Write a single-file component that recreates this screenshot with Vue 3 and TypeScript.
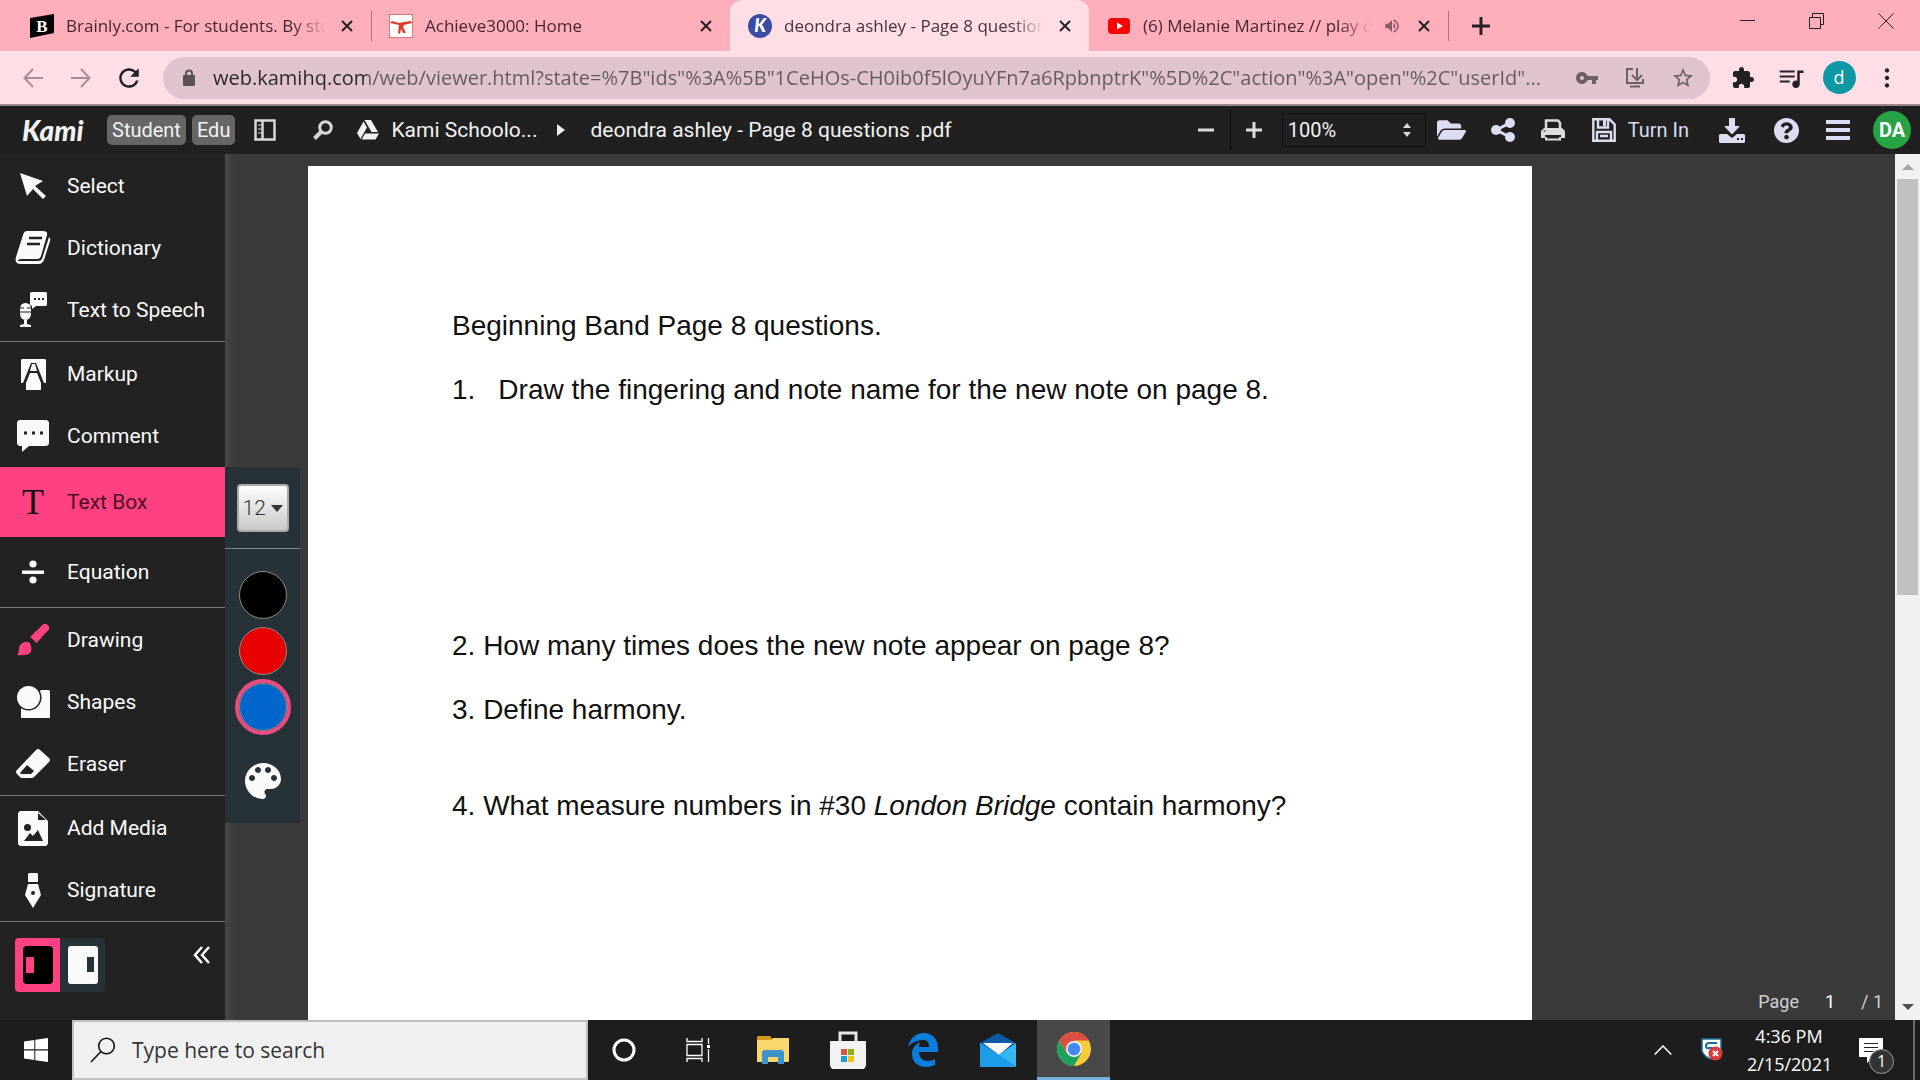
<script setup lang="ts">
import { ref } from 'vue'

const address = ref('web.kamihq.com/web/viewer.html?state=%7B"ids"%3A%5B"1CeHOs-CH0ib0f5lOyuYFn7a6RpbnptrK"%5D%2C"action"%3A"open"%2C"userId"...')
const zoomLevel = ref('100%')
const fontSize = ref('12')
const pageNumber = ref('1')
const colour = ref('blue')
const swatches = [
  { name: 'black', value: '#000000' },
  { name: 'red', value: '#e60000' },
  { name: 'blue', value: '#0066cc' },
]
</script>

<template>
  <div class="screen">
    <!-- Browser tabs -->
    <header class="tabs">
      <div class="tab">
        <svg class="fav" viewBox="0 0 24 24">
          <path d="M0 4 24 0V19L0 24Z" fill="#000" />
          <text x="12" y="18" text-anchor="middle" font-family="Liberation Serif, serif" font-weight="700" font-size="17" fill="#fff">B</text>
        </svg>
        <span class="tab-title">Brainly.com - For students. By stu</span>
        <button class="tab-x" aria-label="Close tab"><svg viewBox="0 0 12 12"><path d="M1 1 11 11M11 1 1 11" /></svg></button>
      </div>
      <div class="tab ruled">
        <svg class="fav" viewBox="0 0 24 24">
          <rect x=".5" y=".5" width="23" height="23" fill="#fff" stroke="#d67a78" />
          <path d="M1 9 3 7 10 9 15 8 22 7 23 9 15 11 14 13 17 19 14 19 12 15 11 20 9 19 10 11Z" fill="#dd3a2c" />
        </svg>
        <span class="tab-title">Achieve3000: Home</span>
        <button class="tab-x" aria-label="Close tab"><svg viewBox="0 0 12 12"><path d="M1 1 11 11M11 1 1 11" /></svg></button>
      </div>
      <div class="tab active">
        <svg class="fav" viewBox="0 0 24 24">
          <circle cx="12" cy="12" r="12" fill="#3b4ba8" />
          <text x="12" y="18" text-anchor="middle" font-family="Lato, sans-serif" font-weight="900" font-style="italic" font-size="18" fill="#fff">K</text>
        </svg>
        <span class="tab-title">deondra ashley - Page 8 question</span>
        <button class="tab-x" aria-label="Close tab"><svg viewBox="0 0 12 12"><path d="M1 1 11 11M11 1 1 11" /></svg></button>
      </div>
      <div class="tab">
        <svg class="fav" viewBox="0 0 24 24">
          <rect x="1" y="4" width="22" height="16" rx="4" fill="#f00" />
          <path d="M10 8.500 16 12 10 15.500Z" fill="#fff" />
        </svg>
        <span class="tab-title">(6) Melanie Martinez // play d</span>
        <svg class="speaker" viewBox="0 0 24 24"><path d="M3 9v6h4l5 5V4L7 9H3zm13.500 3c0-1.770-1.020-3.290-2.500-4.030v8.050c1.480-.73 2.500-2.250 2.500-4.020zM14 3.230v2.060c2.890.86 5 3.540 5 6.710s-2.110 5.850-5 6.710v2.060c4.010-.91 7-4.490 7-8.770s-2.990-7.860-7-8.770z" /></svg>
        <button class="tab-x" aria-label="Close tab"><svg viewBox="0 0 12 12"><path d="M1 1 11 11M11 1 1 11" /></svg></button>
      </div>
      <button class="new-tab" aria-label="New tab"><svg viewBox="0 0 18 18" width="18" height="18"><path d="M9 0V18M0 9H18" stroke="#222" stroke-width="3" /></svg></button>
      <div class="window-controls">
        <button aria-label="Minimize"><svg width="16" height="16"><path d="M0 7.500H15" /></svg></button>
        <button aria-label="Restore"><svg width="16" height="16"><path d="M.5 4.500H11.500V15.500H.5ZM3.500 4.500V.5H14.500V11.500H11.500" /></svg></button>
        <button aria-label="Close"><svg width="16" height="16"><path d="M.5 .5 15.500 15.500M15.500 .5 .5 15.500" /></svg></button>
      </div>
    </header>

    <!-- Address bar -->
    <div class="navbar">
      <button class="nav-btn dim" aria-label="Back"><svg width="20" height="20" viewBox="0 0 20 20"><path d="M20 10H2M10 1 1.500 10 10 19" /></svg></button>
      <button class="nav-btn dim" aria-label="Forward"><svg width="20" height="20" viewBox="0 0 20 20"><path d="M0 10H18M10 1 18.500 10 10 19" /></svg></button>
      <button class="nav-btn" aria-label="Reload"><svg width="22" height="22" viewBox="3 3 18 18"><path class="solid" d="M17.650 6.350C16.200 4.900 14.210 4 12 4c-4.420 0-7.990 3.580-7.990 8s3.570 8 7.990 8c3.730 0 6.840-2.550 7.730-6h-2.080c-.82 2.330-3.040 4-5.650 4-3.310 0-6-2.690-6-6s2.690-6 6-6c1.660 0 3.140.69 4.220 1.780L13 11h7V4l-2.350 2.350z" /></svg></button>
      <div class="omnibox">
        <svg width="12" height="18" viewBox="0 0 12 18" class="lock"><path d="M3 7V4.500a3 3 0 0 1 6 0V7" fill="none" stroke="#5a5155" stroke-width="2" /><rect y="6" width="12" height="11" rx="1" fill="#5a5155" /></svg>
        <input v-model="address" class="url" aria-label="Address" spellcheck="false">
        <button class="nav-btn grey" aria-label="Passwords"><svg width="24" height="24" viewBox="0 0 24 24"><path class="solid" d="M12.650 10C11.830 7.670 9.610 6 7 6c-3.310 0-6 2.690-6 6s2.690 6 6 6c2.610 0 4.830-1.670 5.650-4H17v4h4v-4h2v-4H12.650zM7 14c-1.100 0-2-.9-2-2s.9-2 2-2 2 .9 2 2-.9 2-2 2z" /></svg></button>
        <button class="nav-btn grey" aria-label="Install"><svg width="20" height="20" viewBox="0 0 20 20"><path d="M8 1H2V15H18V11M12 0V11M7 7 12 12 17 7M5 18.500H15" /></svg></button>
        <button class="nav-btn grey" aria-label="Bookmark"><svg width="24" height="24" viewBox="0 0 24 24"><path class="solid" d="M22 9.240l-7.190-.62L12 2 9.190 8.630 2 9.240l5.460 4.730L5.820 21 12 17.270 18.180 21l-1.630-7.030L22 9.240zM12 15.400l-3.760 2.270 1-4.280-3.320-2.880 4.380-.38L12 6.100l1.710 4.040 4.380.38-3.320 2.880 1 4.280L12 15.400z" /></svg></button>
      </div>
      <button class="nav-btn" aria-label="Extensions"><svg width="24" height="24" viewBox="0 0 24 24"><path class="solid" d="M20.500 11H19V7c0-1.100-.9-2-2-2h-4V3.500C13 2.120 11.880 1 10.500 1S8 2.120 8 3.500V5H4c-1.100 0-1.990.9-1.990 2v3.800H3.500c1.490 0 2.700 1.210 2.700 2.700s-1.210 2.700-2.700 2.700H2V20c0 1.100.9 2 2 2h3.800v-1.500c0-1.490 1.210-2.700 2.700-2.700 1.490 0 2.700 1.210 2.700 2.700V22H17c1.100 0 2-.9 2-2v-4h1.500c1.380 0 2.500-1.120 2.500-2.500S21.880 11 20.500 11z" /></svg></button>
      <button class="nav-btn" aria-label="Media"><svg width="30" height="30" viewBox="0 0 24 24"><path class="solid" d="M15 6H3v1.500h12V6zm0 4H3v1.500h12v-1.500zM3 15.500h8V14H3v1.500zM17 6v8.180c-.31-.11-.65-.18-1-.18-1.660 0-3 1.340-3 3s1.340 3 3 3 3-1.340 3-3V8h3V6h-5z" /></svg></button>
      <button class="nav-btn" aria-label="Profile"><span class="profile">d</span></button>
      <button class="nav-btn" aria-label="More"><svg width="6" height="20" viewBox="0 0 6 20"><path class="solid" d="M3 .3a2.200 2.200 0 1 0 .01 0ZM3 7.800a2.200 2.200 0 1 0 .01 0ZM3 15.300a2.200 2.200 0 1 0 .01 0Z" /></svg></button>
    </div>

    <!-- Kami toolbar -->
    <div class="appbar">
      <span class="logo">Kami</span>
      <span class="badge">Student</span>
      <span class="badge">Edu</span>
      <button class="side-toggle" aria-label="Toggle sidebar"><svg width="22" height="22" viewBox="0 0 22 22"><path d="M1.500 1.500H20.500V20.500H1.500ZM8.500 2V20" fill="none" stroke="#d8d8d8" stroke-width="2.500" /><path d="M4 6H7M4 10H7M4 14H7" stroke="#d8d8d8" /></svg></button>
      <button class="find" aria-label="Find"><svg width="20" height="20" viewBox="0 0 20 20"><circle cx="12.500" cy="7.500" r="5.800" fill="none" stroke="#d8d8d8" stroke-width="3" /><path d="M8 12 1.500 18.500" stroke="#d8d8d8" stroke-width="4" /></svg></button>
      <svg class="drive" width="22" height="20" viewBox="0 0 22 20"><path d="M7.500 0H14L21 12H14.500ZM6.500 1.500 10 7.500 3.500 19 0 13ZM8 13.500H22L18.500 19.500H4.700Z" fill="#f0f0f0" /></svg>
      <a href="#" class="crumb">Kami Schoolo...</a>
      <svg class="crumb-arrow" width="8" height="12"><path d="M0 0 8 6 0 12Z" fill="#eee" /></svg>
      <span class="file-name">deondra ashley - Page 8 questions .pdf</span>

      <div class="app-tools">
        <button class="minus" aria-label="Zoom out"><svg width="16" height="16"><path d="M0 8H16" stroke="#dcdcdc" stroke-width="3" /></svg></button>
        <button class="plus" aria-label="Zoom in"><svg width="16" height="16"><path d="M0 8H16M8 0V16" stroke="#dcdcdc" stroke-width="3" /></svg></button>
        <div class="zoom">
          <select v-model="zoomLevel" aria-label="Zoom"><option>50%</option><option>100%</option><option>150%</option></select>
          <svg width="8" height="14" viewBox="0 0 8 14"><path d="M0 5 4 0 8 5ZM0 9 4 14 8 9Z" fill="#dcdcdc" /></svg>
        </div>
        <button class="open" aria-label="Open"><svg width="29" height="26" viewBox="0 0 576 512"><path d="M572.694 292.093L500.270 416.248A63.997 63.997 0 0 1 444.989 448H45.025c-18.523 0-30.064-20.093-20.731-36.093l72.424-124.155A64 64 0 0 1 152 256h399.964c18.523 0 30.064 20.093 20.730 36.093zM152 224h328v-48c0-26.510-21.490-48-48-48H272l-64-64H48C21.490 64 0 85.490 0 112v278.046l69.077-118.418C86.214 242.250 117.989 224 152 224z" /></svg></button>
        <button aria-label="Share"><svg width="24" height="24" viewBox="0 0 24 24"><path d="M19 5 5 12 19 19" fill="none" stroke="#dcdcf2" stroke-width="3" /><circle cx="19" cy="5" r="5" /><circle cx="5" cy="12" r="5" /><circle cx="19" cy="19" r="5" /></svg></button>
        <button aria-label="Print"><svg width="24" height="22" viewBox="0 0 24 22"><path d="M5 10V1.500H17L19 4V10" fill="none" stroke="#dcdcdc" stroke-width="2.500" /><path d="M3 9H21L24 12V19H20V16H4V19H0V12Z" fill="#dcdcdc" /><path d="M5 18V20.500H19V18" fill="none" stroke="#dcdcdc" stroke-width="2" /><circle cx="3.500" cy="12" r="1" fill="#555" /></svg></button>
        <button class="turn-in"><svg width="24" height="24" viewBox="0 0 24 24"><path d="M1.300 1.300H17.500L22.700 6.500V22.700H1.300ZM6 2V9.500H16V2M5 22V14H19V22M8 18H16" fill="none" stroke="#dcdcf2" stroke-width="2.400" /><path d="M11 2H14V8H11Z" /></svg>Turn In</button>
        <button class="wide" aria-label="Download"><svg width="26" height="25" viewBox="0 0 26 25"><path d="M10 0H16V8H21L13 16.500 5 8H10ZM1 16H8L13 20 18 16H25L26 17V24L25 25H1L0 24V17Z" /><path d="M18 21H20M22 21H24" stroke="#202020" stroke-width="2" /></svg></button>
        <button class="wide" aria-label="Help"><svg width="25" height="25" viewBox="8 8 496 496"><path d="M504 256c0 136.997-111.043 248-248 248S8 392.997 8 256C8 119.083 119.043 8 256 8s248 111.083 248 248zM262.655 90c-54.497 0-89.255 22.957-116.549 63.758-3.536 5.286-2.353 12.415 2.715 16.258l34.699 26.310c5.205 3.947 12.621 3.008 16.665-2.122 17.864-22.658 30.113-35.797 57.303-35.797 20.429 0 45.698 13.148 45.698 32.958 0 14.976-12.363 22.667-32.534 33.976C247.128 238.528 216 254.941 216 296v4c0 6.627 5.373 12 12 12h56c6.627 0 12-5.373 12-12v-1.333c0-28.462 83.186-29.647 83.186-106.667 0-58.002-60.165-102-116.531-102zM256 338c-25.365 0-46 20.635-46 46 0 25.364 20.635 46 46 46s46-20.636 46-46c0-25.365-20.635-46-46-46z" /></svg></button>
        <button aria-label="Menu"><svg width="24" height="20"><path d="M0 2H24M0 10H24M0 18H24" stroke="#dcdcf2" stroke-width="4" /></svg></button>
        <button class="account" aria-label="Account">DA</button>
      </div>
    </div>

    <!-- Workspace -->
    <main class="workspace">
      <nav class="sidebar">
        <button class="tool"><span class="icon"><svg width="26" height="26" viewBox="0 0 26 26"><path d="M0 0 23 8 15 13 26 23 23 26 13 16 7 23Z" /></svg></span>Select</button>
        <button class="tool"><span class="icon"><svg width="36" height="34" viewBox="0 0 36 34"><path d="M12 0H28Q33 0 32 4L26 25Q25 28 22 28H6Q3 28 3 30H23Q26 30 27 28L34 6Q36 7 35 10L29 29Q27 33 24 33H6Q-1 33 1 26L8 4Q9 0 12 0Z" /><path d="M14 7H27M12 13H25" stroke="#222" stroke-width="2.500" /></svg></span>Dictionary</button>
        <button class="tool"><span class="icon"><svg width="28" height="36" viewBox="0 0 28 36"><path d="M12 0H27L28 1V13L27 14H17L13 17V14L11 13V1Z" /><path d="M1 17Q1 11 6.500 11T12 17V21Q12 28 6.500 28T1 21ZM5 28H8V32L12 33V35H1V33L5 32Z" /><path d="M1 16H5M8 16H12M1 20H12" stroke="#222" /><path d="M15 7H17M19 7H21M23 7H25" stroke="#222" stroke-width="2" /></svg></span>Text to Speech</button>
        <hr>
        <button class="tool"><span class="icon"><svg width="25" height="31" viewBox="0 0 25 31"><path d="M1 0H24L25 1V24H23L15 4H10L2 24H0V1Z" /><path d="M9 14H16L20 24V31H5V24Z" /><path d="M11 5H14L16 12H9Z" /></svg></span>Markup</button>
        <button class="tool"><span class="icon"><svg width="32" height="32" viewBox="0 0 32 32"><path d="M2 0H30L32 2V24L30 26H12L5 32V26H2L0 24V2Z" /><path d="M7 13H10M15 13H18M23 13H26" stroke="#222" stroke-width="3" /></svg></span>Comment</button>
        <div class="tool-holder">
          <button class="tool tall selected"><span class="icon serif-t">T</span>Text Box</button>
          <section class="options" aria-label="Text box options">
            <div class="size-row">
              <div class="size">
                <select v-model="fontSize" aria-label="Font size"><option>10</option><option>12</option><option>14</option></select>
                <svg width="12" height="7"><path d="M0 0H12L6 7Z" fill="#333" /></svg>
              </div>
            </div>
            <div class="swatches">
              <button v-for="s in swatches" :key="s.name" class="swatch" :class="{ chosen: s.name === colour }" :aria-label="s.name" @click="colour = s.name">
                <svg width="48" height="48"><circle cx="24" cy="24" r="23.500" :fill="s.value" stroke="#8a8a82" /></svg>
              </button>
              <button class="palette" aria-label="More colours"><svg width="36" height="36" viewBox="3 3 18 18"><path d="M12 3c-4.970 0-9 4.030-9 9s4.030 9 9 9c.83 0 1.500-.67 1.500-1.500 0-.39-.15-.74-.39-1.010-.23-.26-.38-.61-.38-.99 0-.83.67-1.500 1.500-1.500H16c2.760 0 5-2.240 5-5 0-4.420-4.030-8-9-8zm-5.500 9c-.83 0-1.500-.67-1.500-1.500S5.670 9 6.500 9 8 9.670 8 10.500 7.330 12 6.500 12zm3-4C8.670 8 8 7.330 8 6.500S8.670 5 9.500 5s1.500.67 1.500 1.500S10.330 8 9.500 8zm5 0c-.83 0-1.500-.67-1.500-1.500S13.670 5 14.500 5s1.500.67 1.500 1.500S15.330 8 14.500 8zm3 4c-.83 0-1.500-.67-1.500-1.500S16.670 9 17.500 9s1.500.67 1.500 1.500-.67 1.500-1.500 1.500z" /></svg></button>
            </div>
          </section>
        </div>
        <button class="tool tall"><span class="icon"><svg width="24" height="24"><circle cx="12" cy="4" r="3.600" /><circle cx="12" cy="20" r="3.600" /><path d="M1 10.500H23V14H1Z" /></svg></span>Equation</button>
        <hr>
        <button class="tool"><span class="icon"><svg width="32" height="32" viewBox="0 0 32 32"><path d="M28 4 19 13" stroke="#ff4081" stroke-width="8" stroke-linecap="round" /><path d="M13 13.500 19 7 25 13 19 19.500Q18 15 13 13.500Z" fill="#ff4081" /><path d="M2 24Q3 19 8 18T14 22 13 29Q9 32 0 31Q2 29 2 24Z" fill="#ff4081" /></svg></span>Drawing</button>
        <button class="tool"><span class="icon"><svg width="33" height="32" viewBox="0 0 33 32"><path d="M24 4H32L33 5V32H4V22Z" /><circle cx="11.500" cy="11.500" r="13" fill="#222" /><circle cx="11.500" cy="11.500" r="11.500" /></svg></span>Shapes</button>
        <button class="tool"><span class="icon"><svg width="34" height="30" viewBox="0 0 34 30"><path d="M20 1Q22 -1 24 1L33 9Q35 11 33 13L18 28Q17 29 15 29H5L1 25Q-1 23 1 21Z" /><path d="M4 24 11 16 18 22 15 25H5Z" fill="#222" /></svg></span>Eraser</button>
        <hr>
        <button class="tool"><span class="icon"><svg width="30" height="35" viewBox="0 0 30 35"><path d="M2 0H20L30 10V33L28 35H2L0 33V2Z" /><path d="M20 2V9H28ZM6 30 12 22 15 25 20 19 25 30Z" fill="#222" /><circle cx="9.500" cy="16.500" r="3.500" fill="#222" /></svg></span>Add Media</button>
        <button class="tool"><span class="icon"><svg width="16" height="35" viewBox="0 0 16 35"><path d="M3 1 4 0H12L13 1V9H3ZM3 11H13L16 22 8 35 0 22Z" /><circle cx="8" cy="20" r="2" fill="#222" /></svg></span>Signature</button>
        <hr>
        <div class="side-foot">
          <button class="dock on" aria-label="Dock left"><svg width="30" height="38"><rect width="30" height="38" rx="4" fill="#000" /><rect x="3" y="11" width="8" height="16" fill="#ff4081" /></svg></button>
          <button class="dock" aria-label="Dock right"><svg width="30" height="38"><rect width="30" height="38" rx="3" /><rect x="19" y="11" width="7" height="15" fill="#263238" /></svg></button>
          <button class="collapse" aria-label="Collapse"><svg width="17" height="18" viewBox="0 0 17 18"><path d="M9 1 2 9 9 17M16 1 9 9 16 17" fill="none" stroke="#fff" stroke-width="2.500" /></svg></button>
        </div>
      </nav>

      <div class="viewer">
        <article class="paper">
          <p>Beginning Band Page 8 questions.</p>
          <p class="answer-large"><span class="num">1.</span>Draw the fingering and note name for the new note on page 8.</p>
          <p>2. How many times does the new note appear on page 8?</p>
          <p class="answer-small">3. Define harmony.</p>
          <p>4. What measure numbers in #30 <em>London Bridge</em> contain harmony?</p>
        </article>
        <div class="pager"><label for="page-no">Page</label><input id="page-no" v-model="pageNumber"><span>/ 1</span></div>
      </div>
      <div class="scrollbar">
        <svg width="12" height="6"><path d="M0 6 6 0 12 6Z" fill="#a3a3a3" /></svg>
        <div class="track"><div class="thumb"></div></div>
        <svg width="12" height="6"><path d="M0 0 6 6 12 0Z" fill="#505050" /></svg>
      </div>
    </main>

    <!-- Windows taskbar -->
    <footer class="taskbar">
      <button class="start" aria-label="Start"><svg width="24" height="24" viewBox="0 0 24 24"><path d="M0 3.500 10.300 2V11.300H0ZM11.300 1.800 24 0V11.300H11.300ZM0 12.500H10.300V22L0 20.500ZM11.300 12.500H24V24L11.300 22.200Z" fill="#fff" /></svg></button>
      <div class="search">
        <svg width="26" height="26" viewBox="0 0 26 26"><circle cx="16.500" cy="9" r="7.800" fill="none" stroke="#111" stroke-width="1.600" /><path d="M11 14.500 1 25" stroke="#111" stroke-width="1.600" /></svg>
        <input placeholder="Type here to search" aria-label="Type here to search">
      </div>
      <button class="task cortana" aria-label="Cortana"><svg width="24" height="24"><circle cx="12" cy="12" r="10" fill="none" stroke="#fff" stroke-width="3" /></svg></button>
      <button class="task" aria-label="Task view"><svg width="24" height="24"><path d="M1 0V3.500H16V0M1 6.500H16V17.500H1ZM1 24V20.500H16V24M22.500 0V6M22.500 11V24" fill="none" stroke="#fff" stroke-width="1.300" /><path d="M21 7H24V10H21Z" fill="#fff" /></svg></button>
      <button class="task" aria-label="File Explorer"><svg width="32" height="28" viewBox="0 0 32 28"><path d="M0 1 1 0H13L15 3V6H0Z" fill="#d49a18" /><path d="M0 4H14L16 2H32V25L31 26H0Z" fill="#fbd66c" /><path d="M5 16 7 14H25L27 16V28H21V21H11V28H5Z" fill="#3e93cd" /></svg></button>
      <button class="task" aria-label="Store"><svg width="36" height="38" viewBox="0 0 36 38"><path d="M10 11V2H26V11" fill="none" stroke="#e6e6e6" stroke-width="3" /><path d="M0 10H36V35L34 38H2L0 35Z" fill="#f2f2f2" /><path d="M11 18H17V24H11Z" fill="#d9543f" /><path d="M18 18H24V24H18Z" fill="#8ab313" /><path d="M11 25H17V31H11Z" fill="#18a0dc" /><path d="M18 25H24V31H18Z" fill="#f3c114" /></svg></button>
      <button class="task" aria-label="Edge"><svg width="30" height="34" viewBox="0 0 30 34"><path d="M0 14C2 5 8 0 16 0C25 0 30 7 30 15V19H11C11 25 15 28 20 28C23 28 25 27 27 26V32C24 33 21 34 18 34C10 34 4 29 4 21C4 15 8 11 12 9C11 11 11 12 11 14H21C21 9 19 7 15 7C10 7 4 9 0 14Z" fill="#0a7ddb" /></svg></button>
      <button class="task" aria-label="Mail"><svg width="36" height="34" viewBox="0 0 36 34"><path d="M0 10 18 0 36 10V22H0Z" fill="#0c59a4" /><path d="M3 10H33L19 22Z" fill="#f6f6f6" /><path d="M0 10 19 22 36 10V34H0Z" fill="#35b8f1" /><path d="M0 10 36 33V34H0Z" fill="#1d9cea" /></svg></button>
      <button class="task current" aria-label="Chrome"><svg width="34" height="34" viewBox="0 0 34 34"><circle cx="17" cy="17" r="17" fill="#fbcb3c" /><path d="M17 17V8.500H31.700A17 17 0 0 0 2.300 8.500L9.600 21.300Z" fill="#dc4e41" /><path d="M2.300 8.500A17 17 0 0 0 17 34L24.400 21.300 17 17 9.600 21.300Z" fill="#1da260" /><circle cx="17" cy="17" r="8" fill="#f1f1f1" /><circle cx="17" cy="17" r="6.300" fill="#4587f3" /></svg></button>
      <div class="tray">
        <button class="chev" aria-label="Show hidden icons"><svg width="18" height="10"><path d="M.7 9.500 9 1 17.300 9.500" fill="none" stroke="#fff" stroke-width="1.500" /></svg></button>
        <svg class="shield" width="22" height="24" viewBox="0 0 22 24"><path d="M1 1H20V14Q17 20 10 21Q3 19 1 13Z" fill="#fff" stroke="#1b6c9c" stroke-width="1.500" /><path d="M16 5H8Q5 5 5 8T8 10H14" fill="none" stroke="#1b6c9c" stroke-width="2" /><circle cx="14.500" cy="15.500" r="7" fill="#d93a3a" /><path d="M12 13 17 18M17 13 12 18" stroke="#fff" stroke-width="2" /></svg>
        <div class="clock"><time>4:36 PM</time><time>2/15/2021</time></div>
        <button class="notice" aria-label="Notifications">
          <svg width="24" height="25"><path d="M0 0H24V19H14L8 25V19H0Z" fill="#fff" /><path d="M5 5.500H19M5 9.500H19M5 13.500H14" stroke="#222" /></svg>
          <span>1</span>
        </button>
      </div>
    </footer>
  </div>
</template>

<style>
body { margin: 0; }
</style>

<style scoped>
.screen { display: flex; flex-direction: column; min-height: 100vh; font-family: Roboto, sans-serif; background: #1d1d1d; }
* { box-sizing: border-box; }
button, input, select { font: inherit; color: inherit; border: 0; padding: 0; margin: 0; background: none; border-radius: 0; outline: 0; }
button { display: flex; align-items: center; justify-content: center; flex: none; cursor: pointer; }
svg { flex: none; display: block; }

.tabs { display: flex; height: 51px; padding-left: 12px; background: #ffaebb; font: 17px/24px "Open Sans", sans-serif; color: #45282f; }
.tab { position: relative; flex: 0 1 359px; min-width: 0; display: flex; align-items: center; padding: 0 15px 0 18px; }
.tab.active { background: #ffdfe5; border-radius: 12px 12px 0 0; color: #45343a; }
.tab.ruled::before, .new-tab::before { content: ""; position: absolute; left: 0; top: 11px; width: 1px; height: 30px; background: #b0707c; }
.fav { width: 24px; height: 24px; }
.tab-title { flex: 1; min-width: 0; margin: 0 12px; overflow: hidden; white-space: nowrap; mask-image: linear-gradient(to right, #000 calc(100% - 32px), transparent); }
.speaker { width: 18px; height: 18px; margin-right: 14px; fill: #8a5c66; }
.tab-x { width: 18px; height: 24px; }
.tab-x svg { width: 12px; height: 12px; stroke: #222; stroke-width: 2; }
.new-tab { position: relative; width: 66px; }
.window-controls { display: flex; margin-left: auto; height: 42px; }
.window-controls button { width: 69px; }
.window-controls svg { fill: none; stroke: #2b1c20; }

.navbar { display: flex; align-items: center; height: 55px; padding: 0 9px; background: #ffdfe5; border-bottom: 2px solid #9b878c; }
.nav-btn { width: 48px; height: 42px; }
.nav-btn svg { fill: none; stroke: #222; stroke-width: 2; }
.nav-btn .solid { fill: #222; stroke: none; }
.nav-btn.dim svg { stroke: #a98d94; }
.nav-btn.grey svg { stroke: #6b6064; }
.nav-btn.grey .solid { fill: #6b6064; }
.omnibox { flex: 1; min-width: 0; display: flex; align-items: center; height: 42px; margin: 0 9px 0 10px; padding: 0 3px 0 20px; border-radius: 21px; background: #dfc5cb; }
.url { flex: 1; min-width: 0; height: 42px; margin-left: 18px; font: 20px/28px "Open Sans", sans-serif; color: #65595d; background: linear-gradient(to right, #2c2528 154px, #65595d 154px) text; -webkit-text-fill-color: transparent; }
.profile { width: 33px; height: 33px; border-radius: 50%; background: #0e98a6; color: #fff; font: 18px/32px "Open Sans", sans-serif; text-align: center; }

.appbar { display: flex; align-items: center; height: 48px; padding: 0 9px 0 22px; background: #202020; color: #f2f2f2; font-size: 20px; line-height: 28px; white-space: nowrap; }
.logo { width: 85px; font: italic 900 28px/30px Lato, sans-serif; }
.badge { padding: 0 5px; margin-right: 6px; border-radius: 5px; background: #666; line-height: 30px; }
.side-toggle { margin-left: 13px; }
.find { margin-left: 37px; }
.drive { margin-left: 24px; }
.crumb { margin-left: 12px; color: inherit; text-decoration: none; font-size: 21px; }
.crumb-arrow { margin: 0 25px 0 20px; }
.file-name { font-size: 21px; }
.app-tools { display: flex; align-items: center; margin-left: auto; }
.app-tools > button { width: 50px; height: 40px; }
.app-tools > button svg { fill: #dcdcf2; }
.app-tools > .wide { width: 54px; }
.app-tools > .open { width: 52px; }
.app-tools > .minus, .app-tools > .plus { width: 48px; }
.app-tools > .plus { border-left: 1px solid #050505; }
.app-tools > .turn-in { width: auto; padding: 0 16px 0 14px; gap: 12px; color: #dcdcf2; }
.zoom { position: relative; display: flex; align-items: center; width: 144px; height: 34px; margin-left: 4px; border: 1px solid #111; }
.zoom select { flex: 1; height: 32px; padding-left: 5px; appearance: none; }
.zoom svg { position: absolute; right: 14px; pointer-events: none; }
.app-tools > .account { width: 38px; height: 38px; margin-left: 10px; border-radius: 50%; background: #27a244; color: #fff; font-weight: 700; }

.workspace { flex: 1; display: flex; background: #3a3a3a; }
.sidebar { flex: none; width: 225px; padding-top: 1px; background: #222; color: #fafafa; fill: #fafafa; font-size: 21px; line-height: 28px; }
.tool { justify-content: flex-start; width: 100%; height: 62px; white-space: nowrap; }
.icon { flex: none; display: flex; justify-content: center; width: 67px; }
.tall { height: 70px; }
.selected { background: #ff4081; color: #4a1024; }
.serif-t { color: #111; font: 36px/36px "Liberation Serif", serif; }
.icon { padding-right: 1px; }
.sidebar hr { height: 1px; margin: 0 0 1px; border: 0; background: #777; }
.tool-holder { position: relative; }
.options { position: absolute; z-index: 2; left: 100%; top: 0; width: 75px; background: #263238; }
.size-row { display: flex; justify-content: center; padding: 17px 0 16px; border-bottom: 1px solid #7c8a90; }
.size { position: relative; display: flex; align-items: center; width: 52px; height: 48px; border: 2px solid #aaa; border-radius: 4px; background: linear-gradient(#fff, #c8c8c8); color: #333; font-weight: 300; }
.size select { width: 48px; height: 44px; padding-left: 4px; appearance: none; }
.size svg { position: absolute; right: 4px; pointer-events: none; }
.swatches { display: flex; flex-direction: column; align-items: center; padding: 18px 0 14px; }
.swatch { width: 56px; height: 56px; border-radius: 50%; border: 4px solid transparent; }
.swatch.chosen { border-color: #ec4a82; }
.palette { width: 56px; height: 56px; margin-top: 18px; }
.side-foot { display: flex; align-items: center; padding: 15px; }
.dock { width: 45px; height: 54px; background: #263238; border-radius: 0 4px 4px 0; }
.dock.on { background: #ff4081; border-radius: 4px 0 0 4px; }
.collapse { width: 28px; height: 32px; margin: 0 -5px 20px auto; }

.viewer { position: relative; flex: 1; min-width: 0; display: flex; padding: 12px 0 0 83px; background: linear-gradient(to right, #484848, #3a3a3a 10px); }
.paper { flex: 0 1 1224px; padding: 128px 40px 0 144px; background: #fff; color: #111; font: 28px/64px "Liberation Sans", Arial, sans-serif; }
.paper p { margin: 0; }
.paper .answer-large { margin-bottom: 192px; }
.paper .answer-small { margin-bottom: 32px; }
.num { margin-right: 23px; }
.pager { position: absolute; right: 12px; bottom: 4px; display: flex; align-items: center; color: #d0d0d0; font-size: 18px; line-height: 28px; }
.pager input { width: 62px; height: 28px; text-align: center; color: #fff; }
.scrollbar { flex: none; width: 25px; display: flex; flex-direction: column; align-items: center; padding: 10px 0; background: #f1f1f1; }
.track { flex: 1; align-self: stretch; padding: 9px 2px; }
.thumb { height: 51%; background: #c1c1c1; }

.taskbar { display: flex; height: 60px; background: #1d1d1d; color: #fff; font-family: "Open Sans", sans-serif; }
.start { width: 72px; }
.search { flex: 0 1 516px; display: flex; align-items: center; padding-left: 16px; border: 2px solid #c0c0c0; background: #f0f0f0; }
.search input { flex: 1; min-width: 0; margin-left: 16px; height: 40px; font-size: 21px; color: #333; }
.search input::placeholder { color: #333; opacity: 1; }
.task { width: 75px; }
.task.cortana { width: 72px; }
.task.current { width: 73px; margin-left: 2px; background: #484848; border-bottom: 3px solid #76b0e0; }
.tray { display: flex; align-items: center; margin-left: auto; padding-right: 5px; }
.chev { width: 48px; height: 60px; }
.shield { margin: 0 24px 0 14px; }
.clock { display: flex; flex-direction: column; width: 84px; text-align: center; font-size: 18px; line-height: 28px; }
.notice { position: relative; width: 84px; height: 60px; padding-right: 2px; border-right: 2px solid #6a6a6a; }
.notice span { position: absolute; left: 38px; top: 29px; width: 25px; height: 25px; border: 1px solid #999; border-radius: 50%; background: #333; font-size: 16px; line-height: 23px; }
</style>
